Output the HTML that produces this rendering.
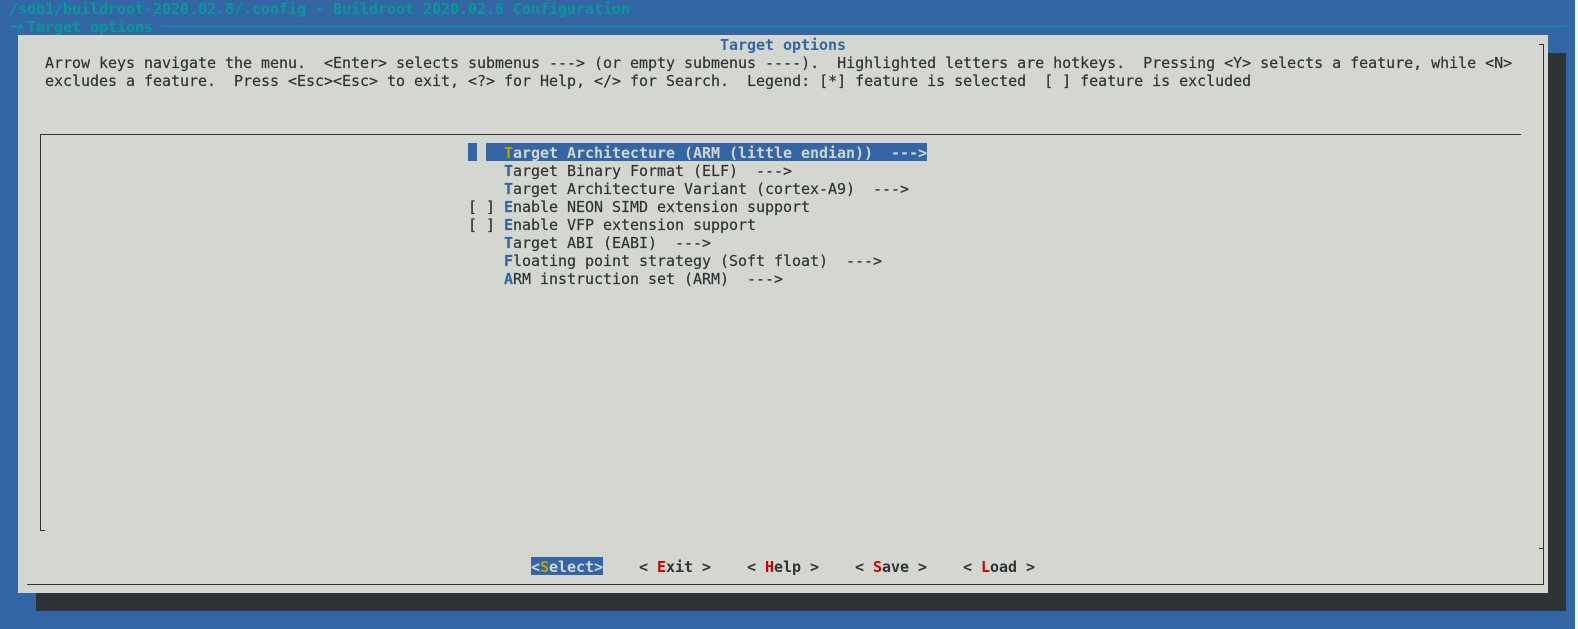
<!DOCTYPE html>
<html><head><meta charset="utf-8"><style>
html,body{margin:0;padding:0;background:#fdf6e3;}
body{width:1578px;height:629px;overflow:hidden;position:relative;}
.a{position:absolute;}
.t{position:absolute;height:18px;margin-top:1px;line-height:18px;font-family:"DejaVu Sans Mono","Liberation Mono",monospace;font-size:15px;letter-spacing:-0.03px;white-space:pre;color:#2e3436;-webkit-text-stroke:0.2px currentColor;}
.l{position:absolute;background:#2e3436;}
b{font-weight:bold;}
.h{color:#3465a4;font-weight:bold;}
.r{color:#cc0000;font-weight:bold;}
.y{color:#c4a000;font-weight:bold;}
.s{color:#d3d7cf;font-weight:bold;}
.n{font-weight:normal;}
</style></head><body>
<div class="a" style="left:0;top:0;width:1575px;height:629px;background:#3465a4"></div>
<div class="a" style="left:36px;top:53px;width:1530px;height:558px;background:#2e3436"></div>
<div class="a" style="left:18px;top:35px;width:1530px;height:558px;background:#d3d7cf"></div>

<div class="t" style="left:9px;top:-1px;color:#06989a;font-weight:bold;-webkit-text-stroke:0">/sdb1/buildroot-2020.02.8/.config - Buildroot 2020.02.8 Configuration</div>
<div class="t" style="left:27px;top:17px;color:#06989a;font-weight:bold;-webkit-text-stroke:0">Target options</div>
<div class="a" style="left:162px;top:26px;width:1404px;height:1px;background:#06989a"></div>
<svg class="a" style="left:9px;top:20px" width="15" height="12"><path d="M1 6.5H13M9.5 3L13 6.5L9.5 10" fill="none" stroke="#06989a" stroke-width="1.7"/></svg>

<div class="l" style="left:1539px;top:44px;width:5px;height:1px"></div>
<div class="l" style="left:1543px;top:44px;width:1px;height:541px"></div>
<div class="l" style="left:27px;top:584px;width:1517px;height:1px"></div>
<div class="l" style="left:1539px;top:548px;width:5px;height:1px"></div>

<div class="t" style="left:720px;top:35px;color:#3465a4;font-weight:bold;-webkit-text-stroke:0">Target options</div>
<div class="t" style="left:45px;top:53px">Arrow keys navigate the menu.  &lt;Enter&gt; selects submenus ---&gt; (or empty submenus ----).  Highlighted letters are hotkeys.  Pressing &lt;Y&gt; selects a feature, while &lt;N&gt;</div>
<div class="t" style="left:45px;top:71px">excludes a feature.  Press &lt;Esc&gt;&lt;Esc&gt; to exit, &lt;?&gt; for Help, &lt;/&gt; for Search.  Legend: [*] feature is selected  [ ] feature is excluded</div>

<div class="l" style="left:40px;top:134px;width:1481px;height:1px"></div>
<div class="l" style="left:40px;top:134px;width:1px;height:397px"></div>
<div class="l" style="left:40px;top:530px;width:5px;height:1px"></div>

<div class="a" style="left:468px;top:143px;width:9px;height:18px;background:#3465a4"></div>
<div class="a" style="left:486px;top:143px;width:441px;height:18px;background:#3465a4"></div>
<div class="t s" style="left:504px;top:143px;-webkit-text-stroke:0"><span class="y">T</span>arget Architecture (ARM (little endian))  ---&gt;</div>
<div class="t" style="left:504px;top:161px"><span class="h">T</span>arget Binary Format (ELF)  ---&gt;</div>
<div class="t" style="left:504px;top:179px"><span class="h">T</span>arget Architecture Variant (cortex-A9)  ---&gt;</div>
<div class="t" style="left:468px;top:197px">[ ]</div>
<div class="t" style="left:504px;top:197px"><span class="h">E</span>nable NEON SIMD extension support</div>
<div class="t" style="left:468px;top:215px">[ ]</div>
<div class="t" style="left:504px;top:215px"><span class="h">E</span>nable VFP extension support</div>
<div class="t" style="left:504px;top:233px"><span class="h">T</span>arget ABI (EABI)  ---&gt;</div>
<div class="t" style="left:504px;top:251px"><span class="h">F</span>loating point strategy (Soft float)  ---&gt;</div>
<div class="t" style="left:504px;top:269px"><span class="h">A</span>RM instruction set (ARM)  ---&gt;</div>

<div class="a" style="left:531px;top:557px;width:72px;height:18px;background:#3465a4"></div>
<div class="t s" style="left:531px;top:557px;-webkit-text-stroke:0">&lt;<span class="y">S</span>elect&gt;</div>
<div class="t" style="left:639px;top:557px;font-weight:bold;-webkit-text-stroke:0">&lt; <span class="r">E</span>xit &gt;</div>
<div class="t" style="left:747px;top:557px;font-weight:bold;-webkit-text-stroke:0">&lt; <span class="r">H</span>elp &gt;</div>
<div class="t" style="left:855px;top:557px;font-weight:bold;-webkit-text-stroke:0">&lt; <span class="r">S</span>ave &gt;</div>
<div class="t" style="left:963px;top:557px;font-weight:bold;-webkit-text-stroke:0">&lt; <span class="r">L</span>oad &gt;</div>
</body></html>
